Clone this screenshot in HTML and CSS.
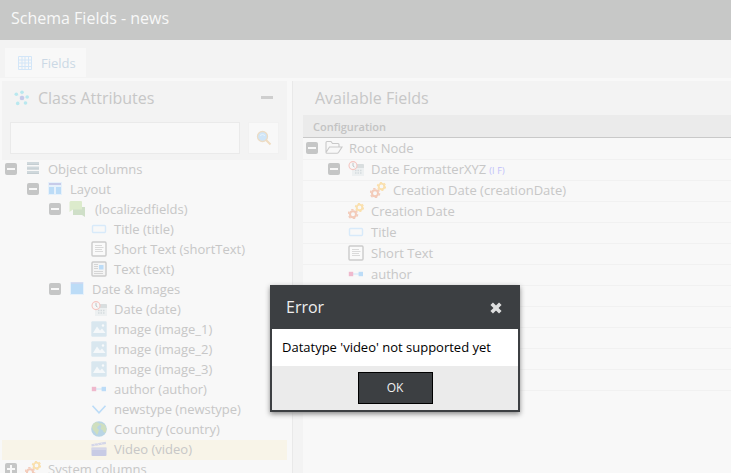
FILE: index.html
```
<!DOCTYPE html>
<html lang="en">
<head>
<meta charset="utf-8">
<title>Schema Fields - news</title>
<link rel="stylesheet" href="styles.css">
</head>
<body>
<svg class="sprite" aria-hidden="true">
  <symbol id="minus" viewBox="0 0 12 12"><rect width="12" height="12" rx="2" fill="#c5c6c6"/><path d="M2 6h8" stroke="#f8f8f8" stroke-width="2"/></symbol>
  <symbol id="plus" viewBox="0 0 12 12"><rect width="12" height="12" rx="2" fill="#c5c6c6"/><path d="M2 6h8M6 2v8" stroke="#f8f8f8" stroke-width="2"/></symbol>
  <symbol id="columns" viewBox="0 0 16 16"><path d="M2 1h12v3H2zM2 5.500h12v3H2zM2 10h12v3H2z" fill="#cfd8dc"/><path d="M2 3.500h12M2 8h12M2 12.500h12" stroke="#c5ced2"/></symbol>
  <symbol id="layout" viewBox="0 0 16 16"><rect x="1" y="1" width="14" height="13" fill="#e6f1fb"/><path d="M2 3h12" stroke="#c7cbe9" stroke-width="2"/><path d="M2 6h5v7H2zM9 6h5v7H9z" fill="#bcdcf7"/></symbol>
  <symbol id="panel" viewBox="0 0 16 16"><rect x="1" y="1" width="14" height="13" fill="#e6f1fb"/><path d="M2 2.500h12v10.500H2z" fill="#bcdcf7"/><path d="M2 2h12" stroke="#c5c9e8"/></symbol>
  <symbol id="chat" viewBox="0 0 16 16"><path d="M4 6h12v10l-3-2H4z" fill="#cfdfc8"/><path d="M1.500 0h10.500q1 0 1 1v7.500H4L.5 11V1z" fill="#dcebcc"/></symbol>
  <symbol id="input" viewBox="0 0 16 16"><rect x="1.500" y="4.500" width="13" height="7" rx="1" fill="#f8f8f8" stroke="#d8eafa" stroke-width="1.400"/></symbol>
  <symbol id="text" viewBox="0 0 16 16"><rect x="1" y="1" width="14" height="14" rx="1" fill="#fafafa" stroke="#cbcbcb" stroke-width="1.400"/><path d="M4 4.500h7M4 6.500h8.500M4 8.500h7M4 10.500h8" stroke="#d2d2d2" stroke-width=".8"/></symbol>
  <symbol id="wysiwyg" viewBox="0 0 16 16"><rect x="1" y="1" width="14" height="14" rx="1" fill="#f4f4f4" stroke="#cbcbcb" stroke-width="1.400"/><path d="M3 3.500h4M3 5.500h4M3 7.500h4M3 10.500h9M3 12.500h9" stroke="#d5d5d5"/><rect x="8" y="4" width="4.500" height="4.500" fill="#bcdcf7"/></symbol>
  <symbol id="date" viewBox="0 0 16 16"><path d="M4 4h12v11H4z" fill="#edf0f1"/><path d="M4 3h11q1 0 1 1v3H4z" fill="#d9dedf"/><path d="M7 9.500h7M7 12h7" stroke="#d5dbde" stroke-width="1.500" stroke-dasharray="1.500 1"/><circle cx="5" cy="4.600" r="4" fill="#f7f7f7" stroke="#f5c6c1" stroke-width="1.100"/><path d="M5 2v3l1.500 1" fill="none" stroke="#bec4c6"/></symbol>
  <symbol id="image" viewBox="0 0 16 16"><rect x=".3" y=".3" width="15.400" height="15.400" rx="1.300" fill="#d9e7ef"/><path d="M2 12 6 5.500l3 4 2-2 3.500 4.500z" fill="#f5f8fa"/><circle cx="12" cy="4.500" r="1.200" fill="#f8fafb"/></symbol>
  <symbol id="relation" viewBox="0 0 16 16"><path d="M5 8h6" stroke="#dcecf8" stroke-width="1.500"/><path d="M.8 5.800h4.400v4.400H.8z" fill="#efb9cd"/><path d="M10.600 5.800H15v4.400h-4.400z" fill="#bcdcf7"/></symbol>
  <symbol id="select" viewBox="0 0 16 16"><path d="m1.500 4.700 6.500 7 6.500-7" fill="none" stroke="#bcdcf7" stroke-width="1.600"/></symbol>
  <symbol id="globe" viewBox="0 0 16 16"><circle cx="8" cy="8" r="7.800" fill="#b9d5e5"/><path d="m2 3 3-2 3 1 1 2-2 1-1 2 2 2-1 3-1 2-2-3-2-2-1-3zM10 2l4 2 1.500 4-1 4-2-1-1-2-2-1 1-3-2-2z" fill="#cfdfbf"/></symbol>
  <symbol id="video" viewBox="0 0 16 16"><path d="M.5 6.500h15V14q0 1-1 1h-13q-1 0-1-1z" fill="#c8cbe5"/><path d="m.3 3.300 14.400-2.500.4 2.300L.7 5.600z" fill="#d4d6e8"/><path d="m3 3 1.400 2M6.500 2.300 8 4.300M10 1.700l1.500 2M1 8h14" stroke="#eeedf0" stroke-width=".7"/></symbol>
  <symbol id="gears" viewBox="0 0 16 16"><g fill="none" stroke="#f3cbb9"><circle cx="5" cy="11.200" r="3" stroke-width="2"/><circle cx="5" cy="11.200" r="4.600" stroke-width="1.400" stroke-dasharray="2.400 2.417"/></g><g fill="none" stroke="#fae0ae"><circle cx="11.500" cy="4.400" r="2.800" stroke-width="1.900"/><circle cx="11.500" cy="4.400" r="4.100" stroke-width="1.200" stroke-dasharray="2.150 2.143"/></g></symbol>
  <symbol id="folder" viewBox="0 0 18 16"><path d="M1 12.500V2.500q0-1 1-1h4l1.500 2H13q1 0 1 1V7M1 12.500 4.500 7H17l-3.500 5.500q-.5.700-1.500.7H2q-1 0-1-.7z" fill="none" stroke="#c9c9c9" stroke-width="1.100"/></symbol>
</svg>

<header class="title-bar">Schema Fields - news</header>
<nav class="toolbar">
  <a class="tab"><svg class="tab-icon" viewBox="0 0 14 14"><path d="M.5.500h13v13H.5zM4 0v14M7 0v14M10.500 0v14M0 4h14M0 7h14M0 10.500h14" fill="none" stroke="#d3e6f8"/></svg>Fields</a>
</nav>

<main class="workspace">
  <section class="attributes">
    <div class="panel-head">
      <div class="panel-title">
        <svg class="cluster" viewBox="0 0 16 16"><g stroke="#e6eff2" stroke-width=".6"><path d="M8 8V2M8 8 2 4M8 8l5-1M8 8l-4 5M8 8l4 5"/></g><circle cx="8" cy="8" r="2.300" fill="#c6caea"/><g fill="#b9e8ef"><circle cx="8" cy="2.300" r="1.800"/><circle cx="2.300" cy="4.300" r="1.800"/><circle cx="13.200" cy="7" r="1.800"/><circle cx="3.700" cy="13.400" r="1.800"/><circle cx="11.500" cy="13" r="1.800"/></g></svg>
        <h2>Class Attributes</h2><span class="collapse"></span>
      </div>
      <div class="search">
        <input class="search-field" type="text" aria-label="Search">
        <button class="search-button" aria-label="Find"><svg viewBox="0 0 16 16"><path d="m10 10 4.500 4.500" stroke="#f0dcc0" stroke-width="2"/><circle cx="6.500" cy="6.500" r="5" fill="#cfe5f8" stroke="#ecdcc5" stroke-width="1.300"/><path d="M4 5.500q2.500-2 5 0" fill="none" stroke="#e8f4fc"/></svg></button>
      </div>
    </div>
    <ul class="tree">
      <li class="d0"><svg class="toggle"><use href="#minus"/></svg><svg class="icon"><use href="#columns"/></svg>Object columns</li>
      <li class="d1"><svg class="toggle"><use href="#minus"/></svg><svg class="icon"><use href="#layout"/></svg>Layout</li>
      <li class="d2 spaced"><svg class="toggle"><use href="#minus"/></svg><svg class="icon"><use href="#chat"/></svg>(localizedfields)</li>
      <li class="d3"><svg class="icon"><use href="#input"/></svg>Title (title)</li>
      <li class="d3"><svg class="icon"><use href="#text"/></svg>Short Text (shortText)</li>
      <li class="d3"><svg class="icon"><use href="#wysiwyg"/></svg>Text (text)</li>
      <li class="d2"><svg class="toggle"><use href="#minus"/></svg><svg class="icon"><use href="#panel"/></svg>Date &amp; Images</li>
      <li class="d3"><svg class="icon"><use href="#date"/></svg>Date (date)</li>
      <li class="d3"><svg class="icon"><use href="#image"/></svg>Image (image_1)</li>
      <li class="d3"><svg class="icon"><use href="#image"/></svg>Image (image_2)</li>
      <li class="d3"><svg class="icon"><use href="#image"/></svg>Image (image_3)</li>
      <li class="d3"><svg class="icon"><use href="#relation"/></svg>author (author)</li>
      <li class="d3"><svg class="icon"><use href="#select"/></svg>newstype (newstype)</li>
      <li class="d3"><svg class="icon"><use href="#globe"/></svg>Country (country)</li>
      <li class="d3 selected"><svg class="icon"><use href="#video"/></svg>Video (video)</li>
      <li class="d0"><svg class="toggle"><use href="#plus"/></svg><svg class="icon"><use href="#gears"/></svg>System columns</li>
    </ul>
  </section>

  <section class="available">
    <h2>Available Fields</h2>
    <div class="grid">
      <div class="grid-head">Configuration</div>
      <ul class="tree">
        <li class="d0"><svg class="toggle"><use href="#minus"/></svg><svg class="icon folder"><use href="#folder"/></svg>Root Node</li>
        <li class="d1"><svg class="toggle"><use href="#minus"/></svg><svg class="icon"><use href="#date"/></svg>Date FormatterXYZ<small>(I F)</small></li>
        <li class="d2"><svg class="icon"><use href="#gears"/></svg>Creation Date (creationDate)</li>
        <li class="d1"><svg class="icon"><use href="#gears"/></svg>Creation Date</li>
        <li class="d1"><svg class="icon"><use href="#input"/></svg>Title</li>
        <li class="d1"><svg class="icon"><use href="#text"/></svg>Short Text</li>
        <li class="d1"><svg class="icon"><use href="#relation"/></svg>author</li>
        <li></li><li></li><li></li><li></li><li></li>
      </ul>
    </div>
  </section>
</main>

<div class="dialog" role="alertdialog">
  <div class="dialog-head"><span>Error</span><svg class="close" viewBox="0 0 12 12"><path d="m1.700 1.700 8.600 8.600M10.300 1.700l-8.600 8.600" stroke="#dedfdf" stroke-width="3.600"/></svg></div>
  <div class="dialog-body">Datatype 'video' not supported yet</div>
  <div class="dialog-foot"><button class="ok">OK</button></div>
</div>
</body>
</html>
```
FILE: styles.css
```
* { box-sizing: border-box; }
body {
  margin: 0;
  width: 731px;
  height: 473px;
  overflow: hidden;
  display: flex;
  flex-direction: column;
  background: #f8f8f8;
  color: #c7c7c7;
  font: 13px/20px "Open Sans", "Noto Sans", sans-serif;
}
.sprite { position: absolute; width: 0; height: 0; }
h2 { margin: 0; font-size: 16px; font-weight: 400; line-height: 20px; }
ul { list-style: none; margin: 0; padding: 0; }

.title-bar {
  flex: none;
  height: 40px;
  padding: 8px 11px;
  background: #c7c8c7;
  color: #f8f8f8;
  font-size: 16px;
  line-height: 20px;
}
.toolbar { flex: none; height: 38px; padding: 8px 5px 1px; background: #f3f3f3; }
.tab {
  display: flex;
  align-items: center;
  width: 81px;
  height: 29px;
  padding-left: 13px;
  gap: 9px;
  background: #f8f8f8;
  color: #cbd8e5;
}
.tab-icon { width: 14px; height: 14px; }

.workspace { flex: 1; min-height: 0; display: flex; padding: 3px 0 0 2px; }
.attributes { flex: none; width: 285px; margin-right: 5px; }
.panel-head { height: 79px; padding: 7px 8px 0; background: #f3f3f3; }
.panel-title { display: flex; align-items: center; height: 20px; padding: 0 6px 0 4px; }
.cluster { width: 16px; height: 16px; margin-right: 8px; }
.collapse { width: 12px; height: 3px; margin-left: auto; margin-bottom: 1px; background: #cecece; }
.search { display: flex; gap: 8px; margin-top: 14px; }
.search-field { width: 230px; height: 32px; border: 1px solid #eaeaea; background: #f8f8f8; outline: none; }
.search-button {
  display: grid;
  place-items: center;
  width: 31px;
  height: 32px;
  padding: 0;
  border: 1px solid #f1f1f1;
  background: #f8f8f8;
}
.search-button svg { width: 16px; height: 16px; }

.tree li { display: flex; align-items: center; height: 20px; padding-bottom: 2px; white-space: nowrap; }
.toggle { flex: none; width: 12px; height: 12px; margin-right: 8px; }
.icon { flex: none; width: 16px; height: 16px; margin-right: 7px; }
.attributes .d0 { padding-left: 5px; }
.attributes .d1 { padding-left: 27px; }
.attributes .d2 { padding-left: 49px; }
.attributes .d3 { padding-left: 89px; }
.attributes .tree .d0, .attributes .tree .d1, .attributes .tree .d2 { margin-left: -2px; }
.spaced .icon { margin-right: 10px; }
.selected { background: #f8f4e8; }

.available { flex: 1; display: flex; flex-direction: column; border-left: 1px solid #e9e9e9; background: #f3f3f3; padding: 7px 0 0 10px; }
.available h2 { height: 27px; padding-left: 12px; }
.grid { flex: 1; background: #f8f8f8; }
.grid-head {
  height: 23px;
  padding: 2px 10px;
  border-bottom: 1px solid #c9c9c9;
  background: #ebebeb;
  color: #c3c3c3;
  font-size: 11px;
  font-weight: 600;
}
.grid .tree li { height: 21px; padding-bottom: 2px; border-bottom: 1px solid #f1f1f1; }
.grid .tree li:first-child { height: 22px; }
.grid .tree .d0 { padding-left: 3px; padding-bottom: 1px; }
.grid .tree .d1 { padding-left: 45px; }
.grid .tree .d2 { padding-left: 67px; }
.grid .d1 .toggle { margin-left: -20px; }
.grid .folder { width: 18px; margin: 0 6px 0 -1px; }
small { margin-left: 3px; padding-top: 3px; color: #c0c0fa; font-size: 9px; letter-spacing: .2px; }

.dialog {
  position: absolute;
  left: 270px;
  top: 285px;
  width: 250px;
  height: 127px;
  display: flex;
  flex-direction: column;
  border: 2px solid #3c3f42;
  background: #fff;
  box-shadow: 0 2px 5px #888;
}
.dialog-head {
  display: flex;
  align-items: center;
  justify-content: space-between;
  height: 42px;
  padding: 0 16px 2px 14px;
  background: #3c3f42;
  color: #eee;
  font-size: 16px;
}
.close { width: 12px; height: 12px; margin-top: 2px; }
.dialog-body { height: 37px; padding: 8px 10px; color: #000; }
.dialog-foot { display: flex; justify-content: center; height: 44px; padding-top: 6px; background: #ebebeb; }
.ok {
  width: 75px;
  height: 32px;
  padding: 0 0 2px;
  border: 1px solid #000;
  background: #3c3f42;
  color: #f0f0f0;
  font: 12px "Open Sans", sans-serif;
}
```
